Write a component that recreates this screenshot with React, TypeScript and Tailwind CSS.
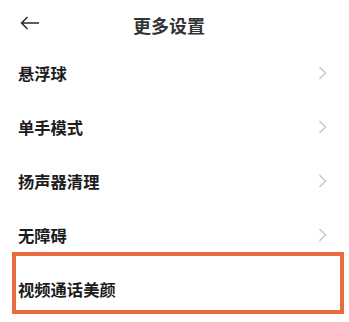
const items = ["悬浮球", "单手模式", "扬声器清理", "无障碍"];

function Chevron() {
  return (
    <svg width="9" height="14" viewBox="0 0 9 14" fill="none" className="text-[#c4c4c4]">
      <path d="M1.5 1L7.5 7L1.5 13" stroke="currentColor" strokeWidth="1.3" />
    </svg>
  );
}

export default function App() {
  return (
    <div
      className="relative h-[322px] w-[349px] overflow-hidden bg-white"
      style={{ fontFamily: '"Noto Sans CJK SC", "Noto Sans", sans-serif' }}
    >
      <div className="relative flex h-[46px] items-center">
        <svg width="20" height="14" viewBox="0 0 20 14" fill="none" className="ml-[20px] text-[#2a2a2a]">
          <path d="M19 7H1.5M7.5 1L1.5 7L7.5 13" stroke="currentColor" strokeWidth="1.5" />
        </svg>
        <div className="absolute left-0 right-[11px] top-[14px] text-center text-[18px] leading-[22px] font-semibold text-[#333333]">
          更多设置
        </div>
      </div>

      {items.map((t) => (
        <div key={t} className="flex h-[54px] items-center justify-between pl-[18px] pr-[22px]">
          <span className="text-[16.3px] font-semibold text-[#1c1c1c]">{t}</span>
          <Chevron />
        </div>
      ))}

      <div className="flex h-[54px] items-center pl-[18px]">
        <span className="text-[16.3px] font-semibold text-[#1c1c1c]">视频通话美颜</span>
      </div>

      <div className="absolute left-[12px] top-[252px] h-[62px] w-[332px] border-4 border-[#e86b40]" />
    </div>
  );
}
